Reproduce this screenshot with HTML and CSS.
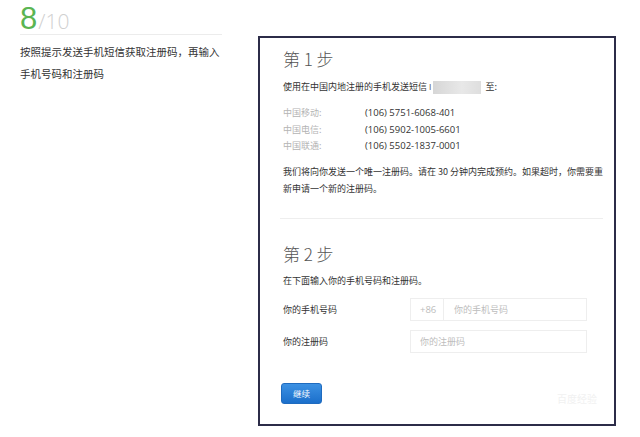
FILE: index.html
```html
<!DOCTYPE html>
<html lang="zh-CN">
<head>
<meta charset="utf-8">
<link rel="stylesheet" href="styles.css">
</head>
<body>
<div class="page">
  <div class="side">
    <div class="step-no"><span class="cur">8</span><span class="total">/10</span></div>
    <p class="desc">按照提示发送手机短信获取注册码，再输入手机号码和注册码</p>
  </div>
  <div class="shot">
    <section class="block first">
      <h2 class="title">第 1 步</h2>
      <p class="line">使用在中国内地注册的手机发送短信 <span class="mark">I</span><span class="blur"></span> 至:</p>
      <div class="carriers">
        <div class="carrier"><span class="name">中国移动:</span><span class="num">(106) 5751-6068-401</span></div>
        <div class="carrier"><span class="name">中国电信:</span><span class="num">(106) 5902-1005-6601</span></div>
        <div class="carrier"><span class="name">中国联通:</span><span class="num">(106) 5502-1837-0001</span></div>
      </div>
      <p class="para">我们将向你发送一个唯一注册码。请在 30 分钟内完成预约。如果超时，你需要重新申请一个新的注册码。</p>
    </section>
    <div class="divider"></div>
    <section class="block second">
      <h2 class="title">第 2 步</h2>
      <p class="line">在下面输入你的手机号码和注册码。</p>
      <div class="row">
        <span class="label">你的手机号码</span>
        <div class="field"><span class="prefix">+86</span><span class="ph">你的手机号码</span></div>
      </div>
      <div class="row">
        <span class="label">你的注册码</span>
        <div class="field"><span class="ph solo">你的注册码</span></div>
      </div>
      <div class="actions">
        <button class="btn">继续</button>
        <span class="wm">百度经验</span>
      </div>
    </section>
  </div>
</div>
</body>
</html>
```
FILE: styles.css
```css
* { box-sizing: border-box; margin: 0; padding: 0; }
html, body { background: #fff; }
body {
  width: 640px;
  height: 437px;
  overflow: hidden;
  font-family: "Noto Sans CJK SC", "Noto Sans", sans-serif;
  color: #333;
}
.page {
  display: flex;
  align-items: flex-start;
  padding-left: 20px;
}
.side {
  width: 202px;
}
.step-no {
  padding: 3px 0 0;
  border-bottom: 1px solid #ececec;
  font-family: "Liberation Sans", Arial, sans-serif;
  line-height: 31px;
  height: 35px;
}
.cur {
  font-size: 31px;
  color: #5ab552;
  font-weight: 400;
}
.total {
  font-family: "Open Sans", "Liberation Sans", sans-serif;
  font-size: 21px;
  color: #d0d0d0;
  font-weight: 300;
  margin-left: 1px;
}
.desc {
  margin-top: 6px;
  font-size: 10.5px;
  line-height: 22px;
  color: #333;
}
.shot {
  margin-left: 36px;
  margin-top: 36px;
  width: 358px;
  height: 390px;
  border: 2px solid #2c2c48;
  padding: 0 9px 0 23px;
  font-size: 9px;
  color: #333;
}
.title {
  font-size: 17px;
  font-weight: 300;
  color: #555;
  line-height: 20px;
}
.first .title { margin-top: 11px; }
.line {
  margin-top: 11px;
  line-height: 14px;
  display: flex;
  align-items: center;
  white-space: pre;
}
.mark { color: #555; font-size: 8px; }
.blur {
  display: inline-block;
  width: 48px;
  height: 13px;
  background: linear-gradient(90deg, #d6d6d6, #e8e8e8 60%, #dedede);
  margin-left: 2px;
  margin-right: 2px;
  filter: blur(0.6px);
}
.carriers {
  margin-top: 11px;
}
.carrier {
  display: flex;
  height: 16.5px;
  line-height: 16.5px;
}
.name {
  width: 82px;
  color: #b4b4b4;
}
.num {
  color: #333;
  font-family: "Open Sans", "Noto Sans", sans-serif;
  font-size: 9.5px;
}
.para {
  margin-top: 8px;
  line-height: 17px;
}
.divider {
  margin-top: 21px;
  height: 1px;
  background: #eeeeee;
  margin-left: -3px;
  margin-right: 2px;
}
.second .title { margin-top: 25px; }
.second .line { margin-top: 10px; }
.row {
  display: flex;
  align-items: center;
  margin-top: 9px;
}
.second .line + .row { margin-top: 10px; }
.label {
  width: 127px;
  color: #333;
}
.field {
  width: 177px;
  height: 23px;
  border: 1px solid #eeeeee;
  display: flex;
  align-items: center;
  color: #bdbdbd;
}
.prefix {
  width: 33px;
  height: 100%;
  display: flex;
  align-items: center;
  padding-left: 9px;
  border-right: 1px solid #eeeeee;
  font-family: "Open Sans", "Noto Sans", sans-serif;
  font-size: 9.5px;
}
.ph { padding-left: 10px; }
.ph.solo { padding-left: 9px; }
.actions {
  margin-top: 28px;
  display: flex;
  align-items: center;
  justify-content: space-between;
  margin-left: -2px;
}
.btn {
  width: 41px;
  height: 21px;
  border: 1px solid #1f6bbf;
  border-radius: 3px;
  background: linear-gradient(#3c91e3, #1b6fcb);
  color: #fff;
  font-family: "Noto Sans CJK SC", sans-serif;
  font-size: 8.5px;
}
.wm {
  color: #f1f1f1;
  font-size: 10px;
  margin-right: 8px;
  margin-top: 10px;
}
```
